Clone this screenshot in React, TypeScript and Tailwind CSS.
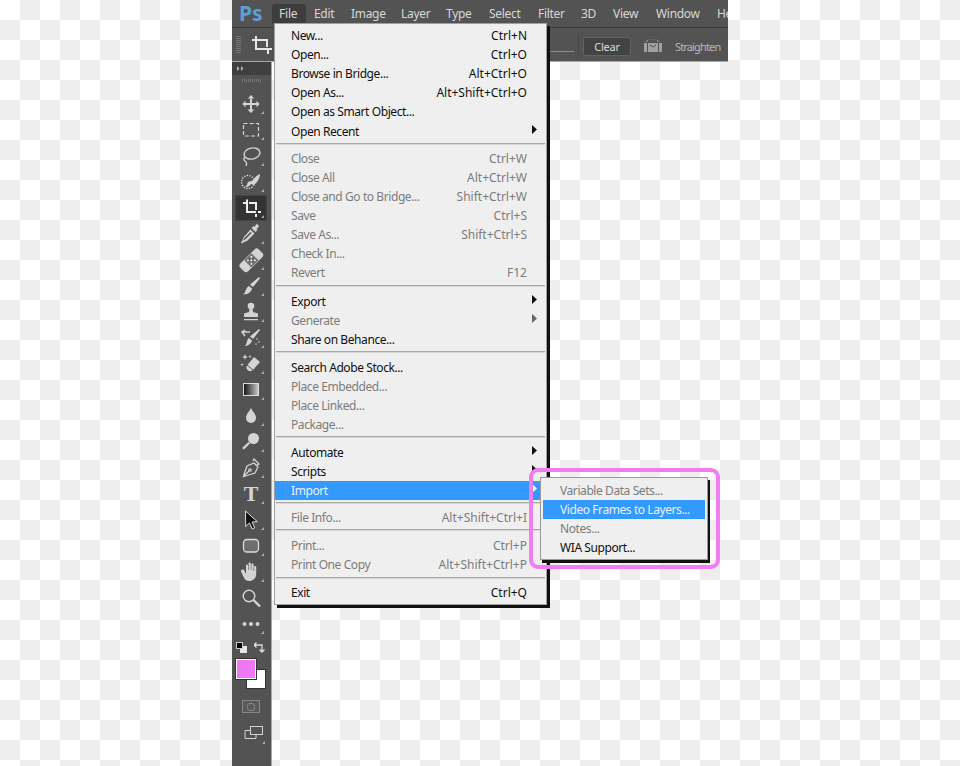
import React from "react";

type Row = { l: string; r?: string; d?: boolean; sub?: boolean; hi?: boolean; nudge?: boolean };
type Group = { rows: Row[]; after: number; pt?: boolean };

const groups: Group[] = [
  {
    after: 8,
    rows: [
      { l: "New...", r: "Ctrl+N" },
      { l: "Open...", r: "Ctrl+O" },
      { l: "Browse in Bridge...", r: "Alt+Ctrl+O" },
      { l: "Open As...", r: "Alt+Shift+Ctrl+O" },
      { l: "Open as Smart Object..." },
      { l: "Open Recent", sub: true, nudge: true },
    ],
  },
  {
    after: 10,
    pt: true,
    rows: [
      { l: "Close", r: "Ctrl+W", d: true },
      { l: "Close All", r: "Alt+Ctrl+W", d: true },
      { l: "Close and Go to Bridge...", r: "Shift+Ctrl+W", d: true },
      { l: "Save", r: "Ctrl+S", d: true },
      { l: "Save As...", r: "Shift+Ctrl+S", d: true },
      { l: "Check In...", d: true },
      { l: "Revert", r: "F12", d: true },
    ],
  },
  {
    after: 9,
    rows: [
      { l: "Export", sub: true },
      { l: "Generate", sub: true, d: true },
      { l: "Share on Behance..." },
    ],
  },
  {
    after: 9,
    rows: [
      { l: "Search Adobe Stock..." },
      { l: "Place Embedded...", d: true },
      { l: "Place Linked...", d: true },
      { l: "Package...", d: true },
    ],
  },
  {
    after: 8,
    rows: [
      { l: "Automate", sub: true },
      { l: "Scripts", sub: true },
      { l: "Import", sub: true, hi: true },
    ],
  },
  { after: 9, rows: [{ l: "File Info...", r: "Alt+Shift+Ctrl+I", d: true }] },
  {
    after: 9,
    pt: true,
    rows: [
      { l: "Print...", r: "Ctrl+P", d: true },
      { l: "Print One Copy", r: "Alt+Shift+Ctrl+P", d: true },
    ],
  },
  { after: 0, rows: [{ l: "Exit", r: "Ctrl+Q" }] },
];

const topItems: [string, string][] = [
  ["Edit", "w-[37px]"],
  ["Image", "w-[50px]"],
  ["Layer", "w-[45px]"],
  ["Type", "w-[43px]"],
  ["Select", "w-[49px]"],
  ["Filter", "w-[43px]"],
  ["3D", "w-[32px]"],
  ["View", "w-[43px]"],
  ["Window", "w-[61px]"],
  ["Help", "w-[40px]"],
];

const C = "#d4d4d4";
const Corner = () => <path d="M33 20v3h-3z" fill="#aaa" />;

const toolIcons: { body: React.ReactNode; corner?: boolean; active?: boolean }[] = [
  {
    corner: true,
    body: (
      <g fill={C}>
        <path d="M19 7.500h2v4.500h4.500V9.800l3.200 3.200-3.200 3.200V14h-4.500v4.500h2.200L20 22l-3.500-3.500h2.500V14h-4.500v2.200L11.300 13l3.200-3.200V12H19z" />
        <path d="M20 4l3.200 3.500h-6.400z" />
      </g>
    ),
  },
  {
    corner: true,
    body: <rect x="12.500" y="6.500" width="15" height="12.500" fill="none" stroke={C} strokeWidth="1.200" strokeDasharray="4 2.200" />,
  },
  {
    corner: true,
    body: (
      <g fill="none" stroke={C} strokeWidth="1.400">
        <ellipse cx="21" cy="10.500" rx="8" ry="5.500" transform="rotate(-12 21 10.500)" />
        <path d="M14 14c-1.500 1.500-1.500 3 0 4s2 3 1 5" />
      </g>
    ),
  },
  {
    corner: true,
    body: (
      <g>
        <circle cx="17" cy="13" r="6.500" fill="none" stroke="#e4e4e4" strokeWidth="1.300" strokeDasharray="1.300 1.300" />
        <path d="M29 5c0 4-3 9-6 11l-3-1c-2 3-4 3-6 3 2-1 2-3 3-5 2-1 3-1 4-1 2-3 5-6 8-7z" fill={C} />
      </g>
    ),
  },
  {
    active: true,
    corner: true,
    body: (
      <g fill="none" stroke="#eeeeee" strokeWidth="2">
        <path d="M12 8h3M16 4.500v12.500h9M18 8h7v7M27 17h3M25 19v3" />
      </g>
    ),
  },
  {
    corner: true,
    body: (
      <g fill={C}>
        <path d="M25 3.500c1.500-1 3.500 1 2.500 2.500l-2 2 1 1-2 2-1-1-1-1-1-1-1-1 2-2 1 1z" />
        <path d="M19.500 8.500l4 4-7.500 7.500-3 1-2 1.500-1-1 1.500-2 1-3zM19.500 11l-6.500 6.500-.6 1.700 1.800-.6 6.500-6.500z" fillRule="evenodd" />
      </g>
    ),
  },
  {
    corner: true,
    body: (
      <g transform="rotate(-45 20 13)">
        <rect x="7" y="8" width="26" height="11" rx="3" fill={C} />
        <rect x="15" y="8.500" width="10" height="10" fill="#6d6d6d" />
        <g fill="#eeeeee">
          <circle cx="17.500" cy="11" r="1" />
          <circle cx="22.500" cy="11" r="1" />
          <circle cx="20" cy="13.500" r="1" />
          <circle cx="17.500" cy="16" r="1" />
          <circle cx="22.500" cy="16" r="1" />
        </g>
      </g>
    ),
  },
  {
    corner: true,
    body: <path d="M28 4c1 0 1 1 .5 2L22 14l-3-2.500zM18 13l3 2.500c-1 5-6 6-9 6 2-1 2-3 3-5 .5-1.500 1.500-3 3-3.500z" fill={C} />,
  },
  {
    corner: true,
    body: (
      <g fill={C}>
        <circle cx="20" cy="7" r="3.300" />
        <path d="M18.500 10h3l.5 3 5 1.500V18H13v-3.500l5-1.500zM13 20h14v1.300H13z" />
      </g>
    ),
  },
  {
    corner: true,
    body: (
      <g fill={C}>
        <path d="M28 4l1 1-7 9-3-2.500zM18 13l3 2.500c-1 4-5 5.500-7 5.500 1-1 1.500-3 2-4.500.3-1.500 1-3 2-3.500z" />
        <path d="M11 7h8M14 11l-3-4 3-2" fill="none" stroke={C} strokeWidth="1.500" />
        <circle cx="26" cy="14" r=".8" />
        <circle cx="28" cy="17" r=".8" />
        <circle cx="25" cy="19" r=".8" />
      </g>
    ),
  },
  {
    corner: true,
    body: (
      <g>
        <path d="M24 5l6 5-7 8c-1.500 1.500-4 1.500-5.500 0s-1.500-3.500 0-5z" fill={C} transform="translate(-1 1)" />
        <path d="M16 14l6 5" stroke="#535353" strokeWidth="1" />
        <path d="M14 3l.8 2.200L17 6l-2.200.8L14 9l-.8-2.200L11 6l2.200-.8zM19 4l.5 1.200 1.200.5-1.200.5-.5 1.200-.5-1.200-1.200-.5 1.200-.5zM11 12l.5 1.200 1.200.5-1.200.5-.5 1.200-.5-1.200-1.200-.5 1.200-.5z" fill={C} />
      </g>
    ),
  },
  {
    corner: true,
    body: (
      <g>
        <defs>
          <linearGradient id="gr" x1="0" x2="1" y1="0" y2="0">
            <stop offset="0" stopColor="#111111" />
            <stop offset="1" stopColor="#cccccc" />
          </linearGradient>
        </defs>
        <rect x="12.500" y="6.500" width="15" height="12" fill="url(#gr)" stroke="#dddddd" />
      </g>
    ),
  },
  {
    corner: true,
    body: <path d="M20 5c1.500 3.500 5 6 5 10a5 5 0 0 1-10 0c0-4 3.500-6.500 5-10z" fill={C} />,
  },
  {
    corner: true,
    body: (
      <g fill={C}>
        <circle cx="22.500" cy="9.500" r="5.500" />
        <path d="M17.500 13l1.500 1.500-6 6-2-1.500z" />
      </g>
    ),
  },
  {
    corner: true,
    body: (
      <g fill="none" stroke={C} strokeWidth="1.300">
        <path d="M23 8l4 4-3 6-8 2.500-3.500 1 1-3.500L16 11zM13 21l5-5M22 6l1-2 5 5-2 1" />
        <circle cx="19" cy="15" r="1.200" />
      </g>
    ),
  },
  {
    corner: true,
    body: (
      <text x="20" y="20" textAnchor="middle" fontFamily="'Liberation Serif', serif" fontWeight="700" fontSize="22" fill={C}>
        T
      </text>
    ),
  },
  {
    corner: true,
    body: <path d="M14.500 4l.2 15.500 3.800-3.600 2.600 6 2.600-1.100-2.600-5.800 5.200-.3z" fill="#111111" stroke="#dddddd" strokeWidth="1" />,
  },
  {
    corner: true,
    body: <rect x="12.500" y="6.500" width="15" height="12.500" rx="3.500" fill="#6e6e6e" stroke="#dddddd" strokeWidth="1.300" />,
  },
  {
    corner: true,
    body: (
      <g fill={C}>
        <path d="M13 11l2 4V6.500c0-1.400 2-1.400 2 0V11h.6V4.500c0-1.400 2.200-1.400 2.200 0V11h.6V5.500c0-1.400 2.200-1.400 2.200 0V12h.6V8c0-1.400 2-1.400 2 0v7c0 4-3 7-7 7-4.500 0-5-3-8-9-1-2 1.500-3.200 2.800-2z" />
      </g>
    ),
  },
  {
    body: (
      <g fill="none" stroke={C}>
        <circle cx="18" cy="11" r="5.800" strokeWidth="1.400" />
        <path d="M22.500 15l6.500 6.500" strokeWidth="2.400" />
      </g>
    ),
  },
  {
    corner: true,
    body: (
      <g fill={C}>
        <circle cx="13.500" cy="13" r="2" />
        <circle cx="20" cy="13" r="2" />
        <circle cx="26.500" cy="13" r="2" />
      </g>
    ),
  },
];

function ToolSlot({ t }: { t: (typeof toolIcons)[number] }) {
  return (
    <div className={`ml-[3px] flex h-[26px] w-[32px] items-center justify-center rounded-[2px] ${t.active ? "bg-[#333333] shadow-[inset_0_0_0_1px_#454545]" : ""}`}>
      <svg width="40" height="26" viewBox="0 0 40 26" className="shrink-0">
        {t.body}
        {t.corner && <Corner />}
      </svg>
    </div>
  );
}

function MenuRow({ r, px }: { r: Row; px?: string }) {
  const color = r.hi ? "text-[#e8f2ff] bg-[#3399ff]" : r.d ? "text-[#7c7c7c]" : "text-[#111111]";
  return (
    <div className={`relative flex h-[19px] items-center justify-between ${r.nudge ? "mt-[1px]" : ""} ${px ?? "pl-[16px] pr-[19px]"} ${color}`}>
      <span className="tracking-[-0.42px]">{r.l}</span>
      {r.r && <span>{r.r}</span>}
      {r.sub && (
        <svg width="5" height="9" viewBox="0 0 5 9" className="absolute right-[9px] top-[3px]">
          <path d="M0 0l5 4.500L0 9z" fill={r.hi ? "#ffffff" : r.d ? "#666666" : "#111111"} />
        </svg>
      )}
    </div>
  );
}

function Sep({ h, pt }: { h: number; pt?: boolean }) {
  return (
    <div className={`mx-[1px] ${pt ? "pt-[3px]" : "pt-[2px]"}`} style={{ height: h }}>
      <div className="h-[1px] bg-[#a8a8a8] shadow-[0_1px_0_#d8d8d8]" />
    </div>
  );
}

export default function App() {
  return (
    <div className="relative h-[766px] w-[960px] overflow-hidden bg-[conic-gradient(#eeeeee_25%,#ffffff_0_50%,#eeeeee_0_75%,#ffffff_0)] bg-[length:40px_40px] [font-family:'Noto_Sans',sans-serif] text-[12px] leading-none">
      {/* top bars */}
      <div className="ml-[232px] w-[496px] bg-[#535353]">
        <div className="flex h-[28px] items-center overflow-hidden border-b border-[#3c3c3c] text-[#d8d8d8]">
          <span className="w-[40px] shrink-0 pl-[7px] text-[21px] font-bold text-[#5b9fd6]">Ps</span>
          <div className="mb-[1px] mt-[1px] flex h-[20px] w-[34px] shrink-0 items-center rounded-t-[3px] bg-[#3d3d3d] pl-[7px] tracking-[-0.2px]">File</div>
          {topItems.map(([t, w]) => (
            <span key={t} className={`${w} shrink-0 pl-[8px] tracking-[-0.3px]`}>
              {t}
            </span>
          ))}
        </div>
        <div className="flex h-[34px] items-center border-b border-[#a9a9a9]">
          <div className="ml-[4px] h-[18px] w-[5px] bg-[repeating-linear-gradient(#777777_0_1px,transparent_1px_2px)]" />
          <svg width="20" height="20" viewBox="0 0 20 20" className="ml-[11px]">
            <path d="M0 5h3M4 1v13h12v5M5 5h10v7M17 14h3" fill="none" stroke="#e6e6e6" strokeWidth="2" />
          </svg>
          <div className="ml-auto mt-[13px] h-[1px] w-[28px] bg-[#8a8a8a]" />
          <div className="mx-[4px] h-[22px] w-[1px] bg-[#474747]" />
          <div className="mt-[3px] flex h-[19px] w-[48px] items-center justify-center rounded-[3px] border border-[#626262] bg-[#434343] text-[11px] tracking-[-0.2px] text-[#dddddd]">Clear</div>
          <svg width="18" height="14" viewBox="0 0 18 14" className="ml-[13px] mt-[1px]">
            <path d="M0 5h3v9H0zM15 5h3v9h-3zM4 5h10v9H4z" fill="#a0a0a0" />
            <path d="M6 7l3 2 3-2" stroke="#535353" fill="none" />
            <path d="M2 4l2-2M9 1v.5M15 4l-2-2M6 1.500v.5M12 1.500v.5" stroke="#a0a0a0" fill="none" />
          </svg>
          <span className="ml-[13px] mr-[8px] mt-[3px] w-[45px] whitespace-nowrap text-[11px] tracking-[-0.85px] text-[#b8b8b8]">Straighten</span>
        </div>
      </div>

      {/* toolbox */}
      <div className="ml-[232px] flex h-[704px] w-[40px] flex-col border-r border-[#a9a9a9] bg-[#535353]">
        <div className="flex h-[13px] shrink-0 items-center gap-[1px] bg-[#3f3f3f] pl-[5px]">
          <svg width="8" height="5" viewBox="0 0 8 5">
            <path d="M0 0l2.500 2.500L0 5zM4 0l2.500 2.500L4 5z" fill="#b5b5b5" />
          </svg>
        </div>
        <div className="mx-auto mt-[4px] h-[3px] w-[20px] shrink-0 bg-[repeating-linear-gradient(90deg,#777777_0_1px,transparent_1px_2px)]" />
        <div className="mt-[9px] flex flex-col">
          {toolIcons.map((t, i) => (
            <ToolSlot key={i} t={t} />
          ))}
        </div>
        <div className="ml-[4px] mt-[5px] flex items-start">
          <div className="relative h-[11px] w-[11px]">
            <div className="absolute bottom-0 right-0 h-[7px] w-[7px] bg-[#e6e6e6]" />
            <div className="absolute left-0 top-0 h-[7px] w-[7px] border border-[#cccccc] bg-black" />
          </div>
          <svg width="12" height="12" viewBox="0 0 12 12" className="ml-[7px]">
            <path d="M0 3h8v7M2.500.5L0 3l2.500 2.500M5.500 7.500L8 10l2.500-2.500" fill="none" stroke="#dddddd" strokeWidth="1.300" />
          </svg>
        </div>
        <div className="relative ml-[4px] mt-[5px] h-[30px] w-[30px]">
          <div className="absolute bottom-0 right-0 h-[20px] w-[20px] border border-[#333333] bg-white" />
          <div className="absolute left-0 top-0 h-[20px] w-[20px] border border-white bg-[#ee77f4] shadow-[0_0_0_1px_#333333]" />
        </div>
        <div className="ml-[10px] mt-[11px] flex h-[13px] w-[18px] items-center justify-center border border-[#888888] bg-[#5a5a5a]">
          <div className="h-[8px] w-[8px] rounded-full border border-dotted border-[#bbbbbb]" />
        </div>
        <svg width="40" height="26" viewBox="0 0 40 26" className="mt-[8px] shrink-0">
          <rect x="18.500" y="5.500" width="12" height="8" fill="none" stroke="#d4d4d4" />
          <path d="M18.500 9.500h-5.500v8h11v-4" fill="none" stroke="#d4d4d4" />
          <Corner />
        </svg>
      </div>

      {/* File menu */}
      <div className="absolute left-[274px] top-[23px] w-[273px] border border-[#a0a0a0] bg-[#efefef] pb-[2px] pt-[2px] shadow-[3px_3px_0_#111111]">
        {groups.map((g, i) => (
          <React.Fragment key={i}>
            {g.rows.map((r) => (
              <MenuRow key={r.l} r={r} />
            ))}
            {g.after > 0 && <Sep h={g.after} pt={g.pt} />}
          </React.Fragment>
        ))}
      </div>

      {/* Import submenu */}
      <div className="absolute left-[540px] top-[477px] w-[168px] border border-[#9a9a9a] bg-[#efefef] p-[2px] pt-[3px] shadow-[2px_3px_0_#111111]">
        <MenuRow r={{ l: "Variable Data Sets...", d: true }} px="pl-[17px]" />
        <MenuRow r={{ l: "Video Frames to Layers...", hi: true }} px="pl-[17px]" />
        <MenuRow r={{ l: "Notes...", d: true }} px="pl-[17px]" />
        <MenuRow r={{ l: "WIA Support..." }} px="pl-[17px]" />
      </div>

      {/* highlight annotation */}
      <div className="absolute left-[529px] top-[468px] h-[101px] w-[191px] rounded-[9px] border-[4px] border-[#f27df2]" />
    </div>
  );
}
